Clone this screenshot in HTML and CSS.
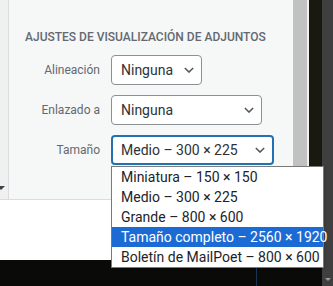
FILE: index.html
```html
<!DOCTYPE html>
<html lang="es">
<head>
  <meta charset="UTF-8">
  <title>Ajustes de adjuntos</title>
  <link rel="stylesheet" href="styles.css">
</head>
<body>

  <div class="screen">
    <div class="main">
      <div class="window">
        <div class="modal">
          <div class="top">
            <div class="strip"><span class="corner"></span></div>
            <div class="panel">
              <h2>Ajustes de visualización de adjuntos</h2>
              <div class="settings">
                <label>Alineación</label>
                <div class="select align">
                  <span>Ninguna</span>
                  <svg class="chevron" viewBox="0 0 12 7"><path d="M1 1l5 5 5-5"/></svg>
                </div>

                <label>Enlazado a</label>
                <div class="select link">
                  <span>Ninguna</span>
                  <svg class="chevron" viewBox="0 0 12 7"><path d="M1 1l5 5 5-5"/></svg>
                </div>

                <label>Tamaño</label>
                <div class="select size focused">
                  <span>Medio – 300 × 225</span>
                  <svg class="chevron" viewBox="0 0 12 7"><path d="M1 1l5 5 5-5"/></svg>
                  <ul class="options">
                    <li>Miniatura – 150 × 150</li>
                    <li>Medio – 300 × 225</li>
                    <li>Grande – 800 × 600</li>
                    <li class="active">Tamaño completo – 2560 × 1920</li>
                    <li>Boletín de MailPoet – 800 × 600</li>
                  </ul>
                </div>
              </div>
            </div>
          </div>
          <div class="blank"></div>
        </div>
        <div class="scrollbar"></div>
        <div class="gap"></div>
        <div class="dark"></div>
      </div>
      <div class="taskbar"><span class="tick"></span></div>
    </div>
    <div class="edge"><span class="arrow"></span></div>
  </div>

</body>
</html>
```

FILE: styles.css
```css
body {
  margin: 0;
  font-family: Roboto, "Noto Sans", sans-serif;
  overflow: hidden;
}
.screen {
  display: flex;
  width: 333px;
  height: 286px;
}
.main {
  display: flex;
  flex-direction: column;
  width: 322px;
}
.window {
  display: flex;
  height: 260px;
}
.modal {
  display: flex;
  flex-direction: column;
  width: 293px;
  background-color: white;
}
.top {
  display: flex;
  height: 199px;
  border-bottom: 1px solid #dcdcde;
}
.strip {
  width: 9px;
  background-color: #f0f0f1;
  border-right: 1px solid #dcdcde;
  display: flex;
  flex-direction: column;
  justify-content: flex-end;
  padding-bottom: 9px;
  box-sizing: border-box;
}
.corner {
  width: 0;
  height: 0;
  margin-left: -3px;
  border-left: 4px solid transparent;
  border-right: 4px solid transparent;
  border-top: 4px solid #3c434a;
}
.panel {
  flex: 1;
  background-color: #f6f7f7;
  padding: 28px 0 0 16px;
}
.panel h2 {
  margin: 0 0 9px;
  font-size: 12px;
  font-weight: 500;
  line-height: 18px;
  text-transform: uppercase;
  color: #646970;
}
.settings {
  display: grid;
  grid-template-columns: 75px auto;
  column-gap: 11px;
  row-gap: 10px;
  align-items: center;
  justify-items: start;
}
.settings label {
  justify-self: end;
  font-size: 12px;
  color: #646970;
}
.select {
  position: relative;
  display: flex;
  align-items: center;
  justify-content: space-between;
  height: 30px;
  box-sizing: border-box;
  padding: 0 7px 0 9px;
  background-color: white;
  border: 1px solid #8c8f94;
  border-radius: 4px;
  font-size: 14px;
  color: #2c3338;
}
.select.align { width: 91px; }
.select.link { width: 151px; }
.select.size {
  width: 163px;
  border: 2px solid #2271b1;
  padding: 0 7px 0 8px;
}
.chevron {
  width: 10px;
  height: 6px;
  fill: none;
  stroke: #50575e;
  stroke-width: 1.8;
}
.options {
  position: absolute;
  top: 29px;
  left: -2px;
  z-index: 2;
  width: 213px;
  margin: 0;
  padding: 0;
  list-style: none;
  background-color: white;
  border: 1px solid #7a7a7a;
  box-sizing: border-box;
  box-shadow: 1px 1px 2px rgba(0, 0, 0, 0.15);
}
.options li {
  height: 20px;
  line-height: 20px;
  padding-left: 9px;
  white-space: nowrap;
  color: #1d2327;
}
.options li.active {
  background-color: #1c6bd5;
  color: white;
}
.blank {
  flex: 1;
}
.scrollbar {
  width: 14px;
  background-color: #c1c1c1;
}
.gap {
  width: 2px;
  background-color: #f0f0f0;
}
.dark {
  width: 13px;
  background-color: #1a190f;
}
.taskbar {
  flex: 1;
  background-color: #0a0b08;
  display: flex;
  align-items: flex-end;
}
.tick {
  width: 1px;
  height: 20px;
  margin-left: 256px;
  background-color: #1a3550;
}
.edge {
  width: 11px;
  background-color: #3f3f3f;
  display: flex;
  flex-direction: column;
  justify-content: flex-end;
  align-items: center;
  padding-bottom: 5px;
  box-sizing: border-box;
}
.arrow {
  width: 0;
  height: 0;
  border-left: 3px solid transparent;
  border-right: 3px solid transparent;
  border-top: 3px solid #9a9a9a;
}
```
